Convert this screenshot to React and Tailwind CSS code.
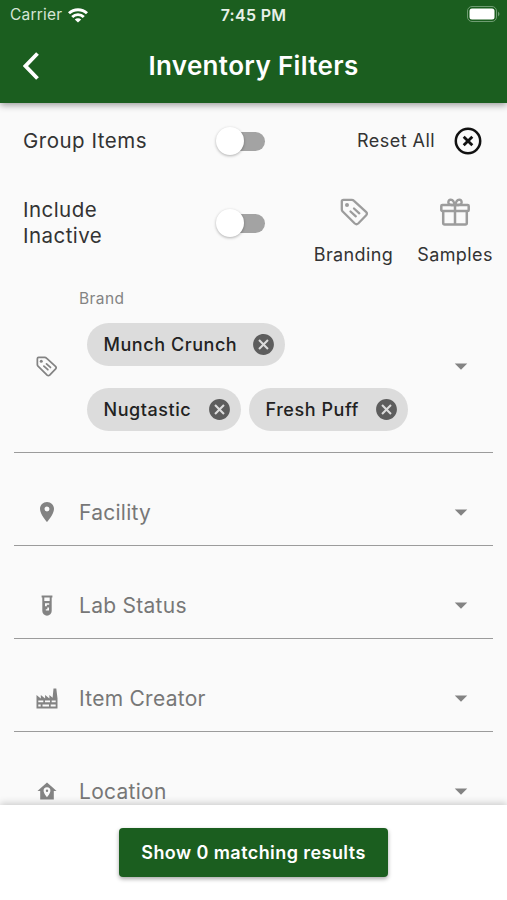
import React from 'react';
import { MdCancel, MdLocationOn, MdArrowDropDown } from 'react-icons/md';

function TagIcon({ className }) {
  return (
    <svg viewBox="0 0 28 28" className={className} fill="none" stroke="currentColor" strokeLinejoin="round" strokeLinecap="round">
      <path strokeWidth="2.300" d="M3.500 1.800h8.200q1.300 0 2.300 1L26 13.800q1.700 1.700.2 3.400L18.200 25.500q-1.700 1.500-3.400 0L2.700 13.500q-.9-1-.9-2.300V3.500q0-1.700 1.700-1.700z" />
      <circle cx="7" cy="7" r="2" fill="currentColor" stroke="none" />
      <path strokeWidth="2.300" d="M14 10.500l5.300 4.800M10.500 13.500l5.300 4.800" />
    </svg>
  );
}

function GiftIcon() {
  return (
    <svg viewBox="0 0 30 28" className="w-[30px] h-7" fill="none" stroke="currentColor" strokeWidth="2.5" strokeLinejoin="round">
      <rect x="1.300" y="7" width="27.400" height="6" rx="1" />
      <path d="M3.200 13v12q0 1.500 1.500 1.500h20.600q1.500 0 1.500-1.500V13M15 7v19.500" />
      <path d="M14.500 7H11Q8.300 6 8.300 4.200 8.400 1.800 10.800 1.600 14 2 14.500 7zM15.500 7H19q2.700-1 2.700-2.800-.1-2.400-2.500-2.600Q16 2 15.500 7z" strokeWidth="2.300" />
    </svg>
  );
}

function TestTubeIcon() {
  return (
    <svg viewBox="0 0 12 21" className="w-3 h-[21px]" fill="currentColor">
      <path fillRule="evenodd" d="M.6.5h10.800v2h-.7v13.500a4.700 4.700 0 0 1-9.400 0V2.500H.6zM3.300 2.500v3.600h5.400V2.500zM4 8.300v3h1.800v-1.500h2.400V8.300zM6.300 12.500v1.800H4.800v1.300h3.200v-3.100z" />
    </svg>
  );
}

function FactoryIcon() {
  return (
    <svg viewBox="0 0 22 21" className="w-[22px] h-[21px]" fill="currentColor">
      <path fillRule="evenodd" d="M.5 20.500V7l4.300 3.500V7l4.300 3.500V7l4.300 3.500V7l3.200 2.800L17.500.5h2.800l1.200 10v10zM2.300 12.500v1.800h5v-1.800zM9 12.500v1.800h5v-1.800zM15.700 12.500v1.800h4v-1.800zM2.300 16.500v1.900h2.400v-1.900zM6.500 16.500v1.900H13v-1.900zM14.700 16.500v1.900h5v-1.900z" />
    </svg>
  );
}

function HomePinIcon() {
  return (
    <svg viewBox="0 0 20 18" className="w-5 h-[18px]" fill="currentColor">
      <path fillRule="evenodd" d="M10 .5l6 5.200L19.500 9h-2.700v8.500H3.200V9H.5L4 5.700zM10 5.200a3.400 3.400 0 0 0-3.400 3.500c0 2.500 3.400 6.500 3.400 6.500s3.400-4 3.400-6.500A3.400 3.400 0 0 0 10 5.200zM10 7.500a1.200 1.200 0 1 1 0 2.400 1.200 1.200 0 0 1 0-2.400z" />
    </svg>
  );
}

function WifiIcon() {
  return (
    <svg viewBox="0 0 20 15" className="w-5 h-[15px]" fill="none" stroke="currentColor" strokeWidth="2.900">
      <path d="M1 5.300a13 13 0 0 1 18 0M4.200 9a8.300 8.300 0 0 1 11.600 0" />
      <path d="M6.800 11.500a4.600 4.600 0 0 1 6.400 0L10 14.600z" fill="currentColor" stroke="none" />
    </svg>
  );
}

function Switch() {
  return (
    <div className="w-[49px] h-7 flex items-center">
      <div className="w-7 h-7 rounded-full bg-white shadow-[0_1px_3px_rgba(0,0,0,0.3)] z-10 shrink-0" />
      <div className="w-[35px] h-[19px] -ml-[14px] rounded-r-full bg-[#a3a3a3] shrink-0" />
    </div>
  );
}

function Chip({ label, className }) {
  return (
    <div className={`h-[43px] rounded-full bg-[#dcdcdc] flex items-center justify-between pl-[16.5px] pr-[9px] ${className}`}>
      <span className="text-lg font-medium text-[#222] whitespace-nowrap tracking-[0.55px]">{label}</span>
      <MdCancel className="w-[25px] h-[25px] text-[#5d5d5d]" />
    </div>
  );
}

const fields = [
  { label: 'Facility', icon: <MdLocationOn className="w-6 h-6" /> },
  { label: 'Lab Status', icon: <TestTubeIcon /> },
  { label: 'Item Creator', icon: <FactoryIcon /> },
  { label: 'Location', icon: <HomePinIcon /> },
];

export default function App() {
  return (
    <div className="w-[507px] h-[900px] flex flex-col overflow-hidden bg-[#fafafa] font-['Inter',sans-serif] text-[#333]">
      <header className="h-[103px] shrink-0 bg-[#1b5e1f] text-white z-10 shadow-[0_2px_7px_rgba(0,0,0,0.4)]">
        <div className="h-[30px] grid grid-cols-3 items-center px-[7px]">
          <div className="flex items-center gap-[6px] pl-[3px] text-[#d5e5d5]">
            <span className="text-[15.5px] tracking-[0.2px]">Carrier</span>
            <span className="text-white"><WifiIcon /></span>
          </div>
          <span className="text-center text-base font-semibold text-[#e8f1e8] whitespace-nowrap tracking-[0.3px]">7:45 PM</span>
          <svg viewBox="0 0 33 16" className="w-[33px] h-4 justify-self-end -mt-[2px]" fill="none">
            <rect x=".5" y=".5" width="29" height="15" rx="4.500" stroke="#6f9c72" />
            <rect x="2.500" y="2.500" width="25" height="11" rx="2.500" fill="#fff" />
            <path d="M31 5.500q3 2.500 0 5z" fill="#6f9c72" />
          </svg>
        </div>
        <div className="h-[73px] grid grid-cols-[100px_1fr_100px] items-center">
          <svg viewBox="0 0 16 28" className="w-4 h-7 ml-[23px] -mt-[2px]" fill="none" stroke="currentColor" strokeWidth="3.800">
            <path d="M14.500 1.500L2.500 14l12 12.500" />
          </svg>
          <h1 className="text-[26px] font-semibold text-center whitespace-nowrap tracking-[0.35px] -mt-[2px]">Inventory Filters</h1>
        </div>
      </header>

      <main className="h-[702px] shrink-0 overflow-hidden px-[14px]">
        <div className="h-[76px] flex items-center pl-[9px]">
          <span className="w-[193px] pt-px text-[20.5px] tracking-[0.5px]">Group Items</span>
          <Switch />
          <div className="flex-1 flex items-center justify-end gap-[19px] pr-[11px]">
            <span className="text-lg tracking-[0.45px]">Reset All</span>
            <svg viewBox="0 0 28 28" className="w-7 h-7 text-[#111]" fill="none" stroke="currentColor" strokeWidth="2.500">
              <circle cx="14" cy="14" r="12.200" />
              <path d="M9.700 9.700l8.600 8.600M18.300 9.700l-8.600 8.600" strokeWidth="2.800" />
            </svg>
          </div>
        </div>

        <div className="h-[88px] flex items-center pl-[9px]">
          <span className="w-[193px] text-[20.5px] leading-[26px] tracking-[0.45px]">Include<br />Inactive</span>
          <Switch />
          <div className="flex-1 flex justify-end gap-6 -mr-[13px] pt-[20px]">
            <div className="w-[79px] flex flex-col items-center gap-[15px]">
              <TagIcon className="w-7 h-7 text-[#9c9c9c]" />
              <span className="text-lg tracking-[0.4px]">Branding</span>
            </div>
            <div className="w-[76px] flex flex-col items-center gap-[15px] mr-[13px]">
              <span className="text-[#9c9c9c]"><GiftIcon /></span>
              <span className="text-lg tracking-[0.4px]">Samples</span>
            </div>
          </div>
        </div>

        <div className="h-[186px] flex border-b border-[#9b9b9b] text-[#838383]">
          <div className="w-[65px] pt-[89px] pl-[22px]">
            <TagIcon className="w-[21px] h-[21px]" />
          </div>
          <div className="flex-1 pt-[20px]">
            <div className="text-[15.5px] leading-6 tracking-[0.4px]">Brand</div>
            <div className="flex flex-wrap gap-x-2 gap-y-[22px] pl-2 pt-3">
              <Chip label="Munch Crunch" className="w-[198px]" />
              <Chip label="Nugtastic" className="w-[154px]" />
              <Chip label="Fresh Puff" className="w-[159px]" />
            </div>
          </div>
          <MdArrowDropDown className="w-[30px] h-[30px] mt-[84px] mr-[17px] shrink-0" />
        </div>

        {fields.map((field) => (
          <div key={field.label} className="h-[93px] flex items-center pt-[26px] border-b border-[#9b9b9b] text-[#838383]">
            <div className="w-[65px] flex justify-center">{field.icon}</div>
            <span className="flex-1 pt-px text-[21px] tracking-[0.27px] text-[#777]">{field.label}</span>
            <MdArrowDropDown className="w-[30px] h-[30px] mr-[17px]" />
          </div>
        ))}
      </main>

      <footer className="h-[95px] shrink-0 bg-white z-10 flex justify-center items-start pt-[23px] shadow-[0_-2px_7px_rgba(0,0,0,0.18)]">
        <button className="w-[269px] h-[49px] rounded bg-[#1b5e1f] text-white text-lg font-semibold whitespace-nowrap tracking-[0.43px] shadow-[0_2px_4px_rgba(0,0,0,0.35)]">
          Show 0 matching results
        </button>
      </footer>
    </div>
  );
}
